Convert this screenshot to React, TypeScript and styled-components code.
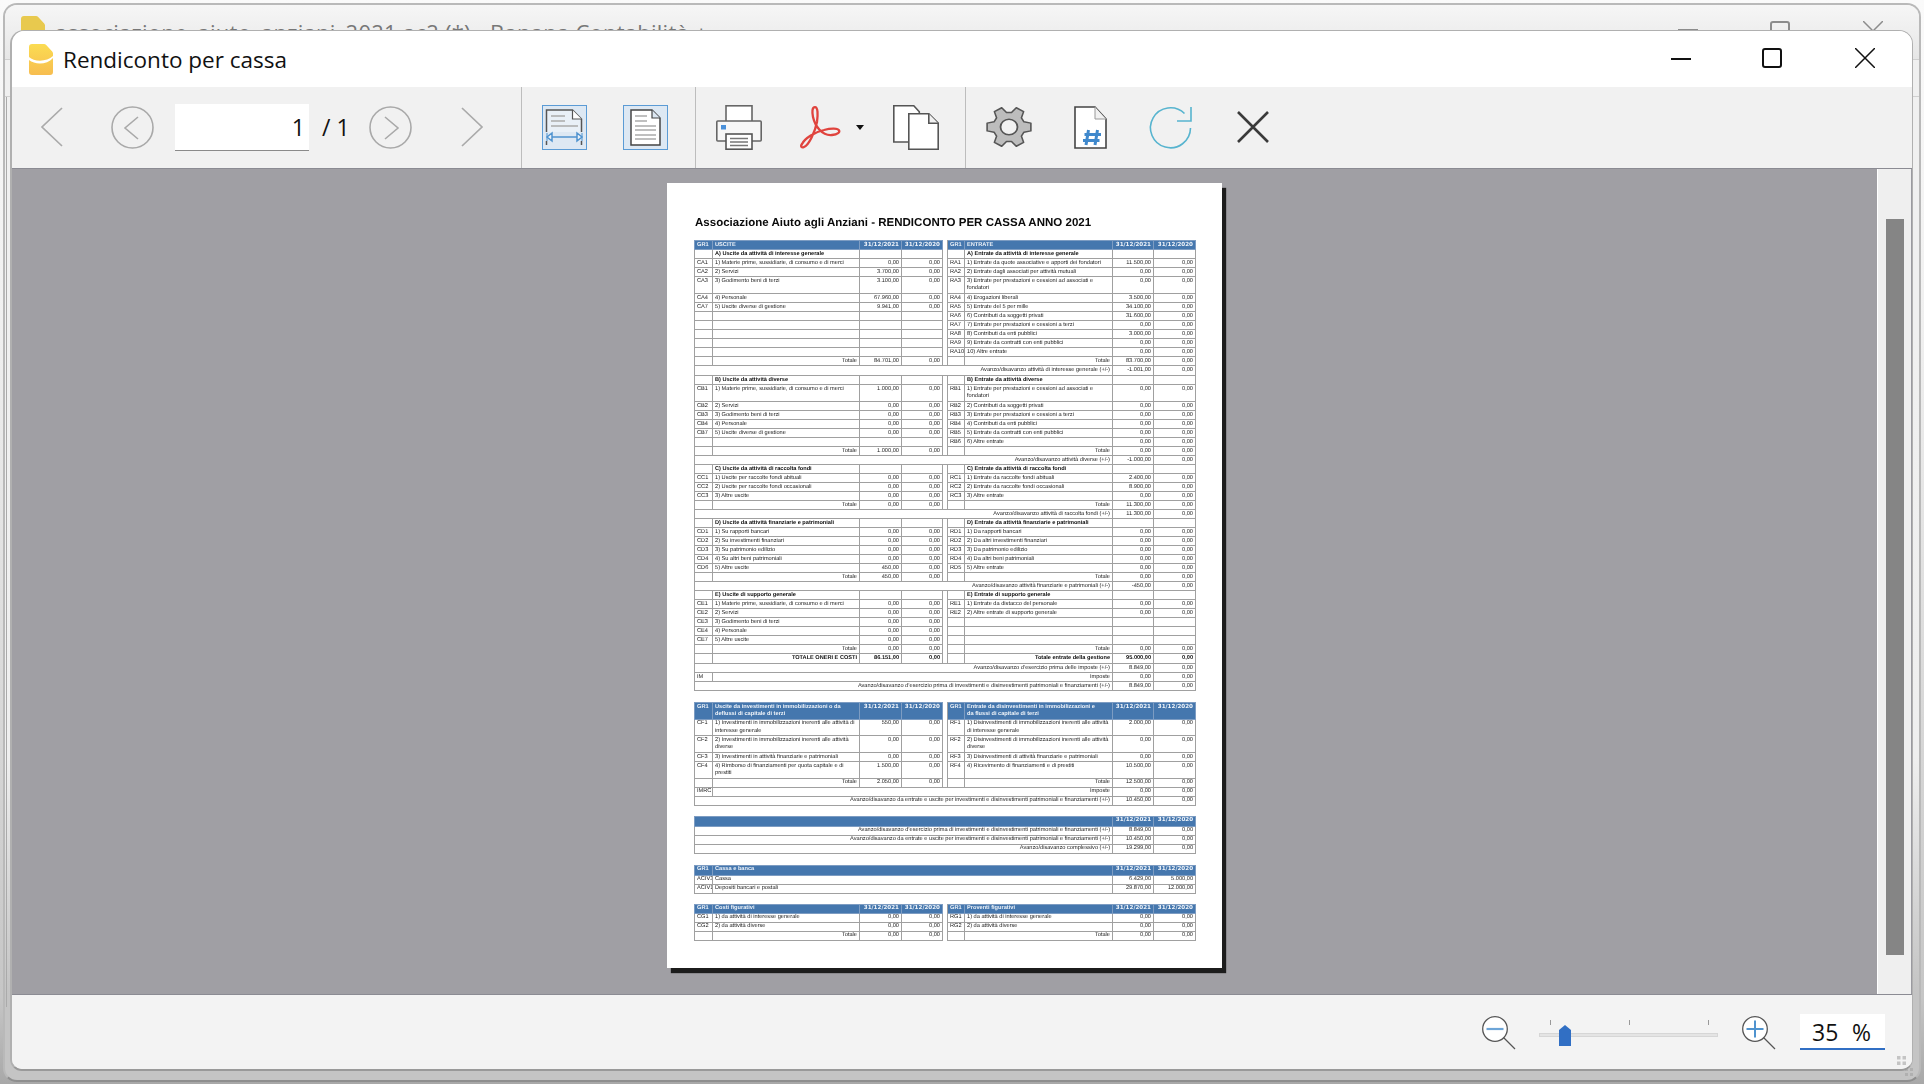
import React from 'react';
import styled, { createGlobalStyle } from 'styled-components';

const GlobalStyle = createGlobalStyle`
  html, body { margin: 0; padding: 0; width: 1924px; height: 1084px; overflow: hidden; }
  * { box-sizing: border-box; }
  body { font-family: "Open Sans", "Liberation Sans", sans-serif; }
`;

const Desktop = styled.div`
  position: relative;
  width: 1924px;
  height: 1084px;
  overflow: hidden;
  background: linear-gradient(#fafafa, #f0f0f0 30%, #c6c6c6 92%, #a8a8a8);
`;

const BackWindow = styled.div`
  position: absolute;
  left: 3px;
  top: 3px;
  width: 1918px;
  height: 1079px;
  border: 2px solid #b9b9b9;
  border-bottom-color: #8e8e8e;
  border-radius: 14px;
  background: linear-gradient(#f0f0f0 30%, #efefef 70%, #c4c4c4 92%);
  overflow: hidden;
`;

const BackTitleBar = styled.div`
  display: flex;
  align-items: flex-start;
  height: 55px;
  padding: 11px 36px 0 16px;
  background: linear-gradient(#f6f6f6, #e6e6e6);
  border-bottom: 1px solid #cfcfcf;
  color: #777;
  font-size: 22px;
  white-space: nowrap;
`;

const BackLogo = styled.svg`
  flex: none;
  width: 24px;
  height: 31px;
  margin-right: 10px;
`;

const BackCaption = styled.span`
  flex: 1;
  margin-top: 1px;
  letter-spacing: 0.25px;
`;

const BackControl = styled.svg<{ $left: number; $top: number }>`
  flex: none;
  width: 20px;
  height: 20px;
  margin-left: ${p => p.$left}px;
  margin-top: ${p => p.$top}px;
`;

const BackToolbar = styled.div`
  height: 37px;
  border-bottom: 1px solid #d0d0d0;
`;

const BackBody = styled.div`
  height: 910px;
  margin-left: 1px;
  border-left: 1px solid #aaa;
`;

const BackGrip = styled.svg`
  position: absolute;
  right: 6px;
  bottom: 3px;
  width: 8px;
  height: 9px;
`;

const Dialog = styled.div`
  position: absolute;
  left: 10px;
  top: 30px;
  width: 1903px;
  height: 1041px;
  display: flex;
  flex-direction: column;
  border: solid #b0b0b0;
  border-width: 1px 1px 2px 2px;
  border-bottom-color: #999;
  border-radius: 14px 14px 12px 12px;
  background: #f1f1f1;
  overflow: hidden;
`;

const TitleBar = styled.header`
  flex: none;
  display: flex;
  align-items: center;
  height: 56px;
  padding: 0 37px 0 17px;
  background: #fff;
`;

const AppLogo = styled.svg`
  flex: none;
  width: 24px;
  height: 31px;
  margin-right: 10px;
`;

const TitleText = styled.h1`
  flex: 1;
  margin: 0;
  font-size: 22.5px;
  font-weight: 400;
  color: #111;
`;

const WindowIcon = styled.svg<{ $left: number }>`
  flex: none;
  width: 20px;
  height: 20px;
  margin-left: ${p => p.$left}px;
  margin-top: -2px;
  fill: none;
  stroke: #111;
`;

const Toolbar = styled.nav`
  flex: none;
  display: flex;
  height: 81px;
  background: #f1f1f1;
`;

const ToolGroup = styled.div<{ $width?: number }>`
  display: flex;
  align-items: center;
  padding-bottom: 1px;
  ${p => (p.$width ? `flex: none; width: ${p.$width}px; border-right: 1px solid #bdbdbd;` : 'flex: 1;')}
`;

const ToolIcon = styled.svg<{ $left: number; $w: number; $h: number }>`
  flex: none;
  width: ${p => p.$w}px;
  height: ${p => p.$h}px;
  margin-left: ${p => p.$left}px;
  overflow: visible;
`;

const PageInput = styled.div`
  flex: none;
  width: 134px;
  height: 47px;
  margin-left: 21px;
  padding-right: 4px;
  background: #fff;
  border-bottom: 1px solid #8a8a8a;
  font-size: 23px;
  line-height: 47px;
  text-align: right;
  color: #111;
`;

const PageCount = styled.span`
  flex: none;
  width: 47px;
  margin-left: 13px;
  font-size: 23px;
  color: #111;
  white-space: pre;
`;

const Workspace = styled.main`
  flex: 1;
  min-height: 0;
  display: flex;
  background: #a09fa4;
  border-top: 1px solid #8b8b93;
  border-bottom: 1px solid #8b8b93;
`;

const Viewport = styled.div`
  flex: 1;
  min-width: 0;
  padding: 14px 0 0 655px;
`;

const Scrollbar = styled.div`
  flex: none;
  width: 35px;
  padding: 50px 7px 0 8px;
  background: #efefef;
  border-left: 1px solid #fff;
  border-right: 1px solid #9a9aa0;
`;

const ScrollThumb = styled.div`
  height: 736px;
  background: #858585;
`;

const Sheet = styled.article`
  width: 555px;
  height: 785px;
  padding: 34px 0 0 27px;
  background: #fff;
  box-shadow: 4px 5px 1px #1c1c1c;
  filter: blur(0.25px);
  text-rendering: geometricPrecision;
`;

const SheetTitle = styled.h2`
  margin: 0 0 11px 1px;
  height: 12px;
  font: 700 11.5px/12px "Liberation Sans", sans-serif;
  letter-spacing: 0.02px;
  color: #0a0a0a;
  white-space: nowrap;
`;

const Report = styled.table<{ $gap?: number }>`
  width: 501px;
  margin-bottom: ${p => p.$gap ?? 0}px;
  border-collapse: collapse;
  table-layout: fixed;
  font: 400 5.65px/7.5px "Liberation Sans", sans-serif;
  color: #1c1c1c;
`;

const Cell = styled.td<{ $head?: boolean; $bold?: boolean; $right?: boolean }>`
  padding: 0.5px 2px 0;
  vertical-align: top;
  overflow: hidden;
  white-space: pre;
  border: 1px solid ${p => (p.$head ? '#7d9cc2' : '#a0a0a0')};
  text-align: ${p => (p.$right ? 'right' : 'left')};
  ${p => p.$bold && 'font: 700 5.6px/7.5px "Liberation Sans", sans-serif; color: #0c0c0c;'}
  ${p => p.$head && 'font-weight: 700; color: #eef3f9; background: #4577ae;'}
`;

const DateCell = styled(Cell)`
  font: 700 5.6px/7.5px "DejaVu Sans", sans-serif;
`;

const Gap = styled.td`
  padding: 0;
  border: 1px solid #a0a0a0;
  border-width: 0 1px;
  background: #fff;
`;

const WideLabel = styled.div<{ $right?: boolean }>`
  text-align: ${p => (p.$right ? 'right' : 'left')};
`;

const StatusBar = styled.footer`
  position: relative;
  flex: none;
  height: 74px;
  display: flex;
  align-items: center;
  justify-content: flex-end;
  padding-right: 27px;
  background: #f3f3f3;
`;

const ZoomTrack = styled.div`
  position: relative;
  flex: none;
  width: 179px;
  height: 24px;
  margin: 0 24px 0 24px;
`;

const TrackBar = styled.div`
  position: absolute;
  left: 0;
  right: 0;
  top: 13px;
  height: 4px;
  background: #e4e4e4;
  border: 1px solid #d6d6d6;
`;

const Tick = styled.i<{ $at: number }>`
  position: absolute;
  left: ${p => p.$at}px;
  top: 0;
  width: 1px;
  height: 5px;
  background: #999;
`;

const Thumb = styled.svg`
  position: absolute;
  left: 20px;
  top: 5px;
  width: 12px;
  height: 21px;
`;

const ZoomValue = styled.div`
  flex: none;
  display: flex;
  justify-content: space-between;
  width: 85px;
  height: 36px;
  margin-left: 25px;
  padding: 0 14px 0 12px;
  background: #fff;
  border-bottom: 2px solid #316fc4;
  font-size: 23px;
  line-height: 36px;
  color: #111;
`;

const Grip = styled.svg`
  position: absolute;
  right: 6px;
  bottom: 4px;
  width: 9px;
  height: 9px;
`;

type Row = { h: number; l?: string[]; r?: string[]; wide?: string; wideL?: string; kind?: 'head' | 'sec' | 'total' };

const z = '0,00';
const blank = ['', '', '', ''];

const main: Row[] = [
  { h: 9, kind: 'head', l: ['GR1', 'USCITE', '31/12/2021', '31/12/2020'], r: ['GR1', 'ENTRATE', '31/12/2021', '31/12/2020'] },
  { h: 9, kind: 'sec', l: ['', 'A) Uscite da attività di interesse generale', '', ''], r: ['', 'A) Entrate da attività di interesse generale', '', ''] },
  { h: 9, l: ['CA1', '1) Materie prime, sussidiarie, di consumo e di merci', z, z], r: ['RA1', '1) Entrate da quote associative e apporti dei fondatori', '11.500,00', z] },
  { h: 9, l: ['CA2', '2) Servizi', '3.700,00', z], r: ['RA2', '2) Entrate dagli associati per attività mutuali', z, z] },
  { h: 17, l: ['CA3', '3) Godimento beni di terzi', '3.100,00', z], r: ['RA3', '3) Entrate per prestazioni e cessioni ad associati e\nfondatori', z, z] },
  { h: 9, l: ['CA4', '4) Personale', '67.960,00', z], r: ['RA4', '4) Erogazioni liberali', '3.500,00', z] },
  { h: 9, l: ['CA7', '5) Uscite diverse di gestione', '9.941,00', z], r: ['RA5', '5) Entrate del 5 per mille', '34.100,00', z] },
  { h: 9, l: blank, r: ['RA6', '6) Contributi da soggetti privati', '31.600,00', z] },
  { h: 9, l: blank, r: ['RA7', '7) Entrate per prestazioni e cessioni a terzi', z, z] },
  { h: 9, l: blank, r: ['RA8', '8) Contributi da enti pubblici', '3.000,00', z] },
  { h: 9, l: blank, r: ['RA9', '9) Entrate da contratti con enti pubblici', z, z] },
  { h: 9, l: blank, r: ['RA10', '10) Altre entrate', z, z] },
  { h: 9, kind: 'total', l: ['', 'Totale', '84.701,00', z], r: ['', 'Totale', '83.700,00', z] },
  { h: 10, wide: 'Avanzo/disavanzo attività di interesse generale (+/-)', r: ['-1.001,00', z] },

  { h: 9, kind: 'sec', l: ['', 'B) Uscite da attività diverse', '', ''], r: ['', 'B) Entrate da attività diverse', '', ''] },
  { h: 17, l: ['CB1', '1) Materie prime, sussidiarie, di consumo e di merci', '1.000,00', z], r: ['RB1', '1) Entrate per prestazioni e cessioni ad associati e\nfondatori', z, z] },
  { h: 9, l: ['CB2', '2) Servizi', z, z], r: ['RB2', '2) Contributi da soggetti privati', z, z] },
  { h: 9, l: ['CB3', '3) Godimento beni di terzi', z, z], r: ['RB3', '3) Entrate per prestazioni e cessioni a terzi', z, z] },
  { h: 9, l: ['CB4', '4) Personale', z, z], r: ['RB4', '4) Contributi da enti pubblici', z, z] },
  { h: 9, l: ['CB7', '5) Uscite diverse di gestione', z, z], r: ['RB5', '5) Entrate da contratti con enti pubblici', z, z] },
  { h: 9, l: blank, r: ['RB6', '6) Altre entrate', z, z] },
  { h: 9, kind: 'total', l: ['', 'Totale', '1.000,00', z], r: ['', 'Totale', z, z] },
  { h: 9, wide: 'Avanzo/disavanzo attività diverse (+/-)', r: ['-1.000,00', z] },

  { h: 9, kind: 'sec', l: ['', 'C) Uscite da attività di raccolta fondi', '', ''], r: ['', 'C) Entrate da attività di raccolta fondi', '', ''] },
  { h: 9, l: ['CC1', '1) Uscite per raccolte fondi abituali', z, z], r: ['RC1', '1) Entrate da raccolte fondi abituali', '2.400,00', z] },
  { h: 9, l: ['CC2', '2) Uscite per raccolte fondi occasionali', z, z], r: ['RC2', '2) Entrate da raccolte fondi occasionali', '8.900,00', z] },
  { h: 9, l: ['CC3', '3) Altre uscite', z, z], r: ['RC3', '3) Altre entrate', z, z] },
  { h: 9, kind: 'total', l: ['', 'Totale', z, z], r: ['', 'Totale', '11.300,00', z] },
  { h: 9, wide: 'Avanzo/disavanzo attività di raccolta fondi (+/-)', r: ['11.300,00', z] },

  { h: 9, kind: 'sec', l: ['', 'D) Uscite da attività finanziarie e patrimoniali', '', ''], r: ['', 'D) Entrate da attività finanziarie e patrimoniali', '', ''] },
  { h: 9, l: ['CD1', '1) Su rapporti bancari', z, z], r: ['RD1', '1) Da rapporti bancari', z, z] },
  { h: 9, l: ['CD2', '2) Su investimenti finanziari', z, z], r: ['RD2', '2) Da altri investimenti finanziari', z, z] },
  { h: 9, l: ['CD3', '3) Su patrimonio edilizio', z, z], r: ['RD3', '3) Da patrimonio edilizio', z, z] },
  { h: 9, l: ['CD4', '4) Su altri beni patrimoniali', z, z], r: ['RD4', '4) Da altri beni patrimoniali', z, z] },
  { h: 9, l: ['CD6', '5) Altre uscite', '450,00', z], r: ['RD5', '5) Altre entrate', z, z] },
  { h: 9, kind: 'total', l: ['', 'Totale', '450,00', z], r: ['', 'Totale', z, z] },
  { h: 9, wide: 'Avanzo/disavanzo attività finanziarie e patrimoniali (+/-)', r: ['-450,00', z] },

  { h: 9, kind: 'sec', l: ['', 'E) Uscite di supporto generale', '', ''], r: ['', 'E) Entrate di supporto generale', '', ''] },
  { h: 9, l: ['CE1', '1) Materie prime, sussidiarie, di consumo e di merci', z, z], r: ['RE1', '1) Entrate da distacco del personale', z, z] },
  { h: 9, l: ['CE2', '2) Servizi', z, z], r: ['RE2', '2) Altre entrate di supporto generale', z, z] },
  { h: 9, l: ['CE3', '3) Godimento beni di terzi', z, z], r: blank },
  { h: 9, l: ['CE4', '4) Personale', z, z], r: blank },
  { h: 9, l: ['CE7', '5) Altre uscite', z, z], r: blank },
  { h: 9, kind: 'total', l: ['', 'Totale', z, z], r: ['', 'Totale', z, z] },
  { h: 10, kind: 'total', l: ['', 'TOTALE ONERI E COSTI', '86.151,00', '0,00'], r: ['', 'Totale entrate della gestione', '95.000,00', '0,00'] },
  { h: 9, wide: 'Avanzo/disavanzo d’esercizio prima delle imposte (+/-)', r: ['8.849,00', z] },
  { h: 9, wideL: 'IM', wide: 'Imposte', r: [z, z] },
  { h: 9, wide: 'Avanzo/disavanzo d’esercizio prima di investimenti e disinvestimenti patrimoniali e finanziamenti (+/-)', r: ['8.849,00', z] },
];

const invest: Row[] = [
  { h: 16, kind: 'head', l: ['GR1', 'Uscite da investimenti in immobilizzazioni o da\ndeflussi di capitale di terzi', '31/12/2021', '31/12/2020'], r: ['GR1', 'Entrate da disinvestimenti in immobilizzazioni e\nda flussi di capitale di terzi', '31/12/2021', '31/12/2020'] },
  { h: 16, l: ['CF1', '1) Investimenti in immobilizzazioni inerenti alle attività di\ninteresse generale', '550,00', z], r: ['RF1', '1) Disinvestimenti di immobilizzazioni inerenti alle attività\ndi interesse generale', '2.000,00', z] },
  { h: 17, l: ['CF2', '2) Investimenti in immobilizzazioni inerenti alle attività\ndiverse', z, z], r: ['RF2', '2) Disinvestimenti di immobilizzazioni inerenti alle attività\ndiverse', z, z] },
  { h: 9, l: ['CF3', '3) Investimenti in attività finanziarie e patrimoniali', z, z], r: ['RF3', '3) Disinvestimenti di attività finanziarie e patrimoniali', z, z] },
  { h: 16, l: ['CF4', '4) Rimborso di finanziamenti per quota capitale e di\nprestiti', '1.500,00', z], r: ['RF4', '4) Ricevimento di finanziamenti e di prestiti', '10.500,00', z] },
  { h: 9, kind: 'total', l: ['', 'Totale', '2.050,00', z], r: ['', 'Totale', '12.500,00', z] },
  { h: 9, wideL: 'IMRC', wide: 'Imposte', r: [z, z] },
  { h: 9, wide: 'Avanzo/disavanzo da entrate e uscite per investimenti e disinvestimenti patrimoniali e finanziamenti (+/-)', r: ['10.450,00', z] },
];

const summary: Row[] = [
  { h: 10, kind: 'head', wide: '', r: ['31/12/2021', '31/12/2020'] },
  { h: 9, wide: 'Avanzo/disavanzo d’esercizio prima di investimenti e disinvestimenti patrimoniali e finanziamenti (+/-)', r: ['8.849,00', z] },
  { h: 9, wide: 'Avanzo/disavanzo da entrate e uscite per investimenti e disinvestimenti patrimoniali e finanziamenti (+/-)', r: ['10.450,00', z] },
  { h: 9, wide: 'Avanzo/disavanzo complessivo (+/-)', r: ['19.299,00', z] },
];

const cash: Row[] = [
  { h: 10, kind: 'head', wideL: 'GR1', wide: 'Cassa e banca', r: ['31/12/2021', '31/12/2020'] },
  { h: 9, wideL: 'ACIV3', wide: 'Cassa', r: ['6.429,00', '5.000,00'] },
  { h: 9, wideL: 'ACIV1', wide: 'Depositi bancari e postali', r: ['29.870,00', '12.000,00'] },
];

const figurative: Row[] = [
  { h: 9, kind: 'head', l: ['GR1', 'Costi figurativi', '31/12/2021', '31/12/2020'], r: ['GR1', 'Proventi figurativi', '31/12/2021', '31/12/2020'] },
  { h: 9, l: ['CG1', '1) da attività di interesse generale', z, z], r: ['RG1', '1) da attività di interesse generale', z, z] },
  { h: 9, l: ['CG2', '2) da attività diverse', z, z], r: ['RG2', '2) da attività diverse', z, z] },
  { h: 9, kind: 'total', l: ['', 'Totale', z, z], r: ['', 'Totale', z, z] },
];

const isGrandTotal = (label: string) => label.startsWith('TOTALE') || label.startsWith('Totale entrate');

// one amount cell: the year headings use the wider face of the printed report
const Amount = ({ value, head, bold }: { value: string; head: boolean; bold?: boolean }) =>
  head ? <DateCell $head $right>{value}</DateCell> : <Cell $right $bold={bold}>{value}</Cell>;

const Side = ({ cells, kind }: { cells: string[]; kind?: Row['kind'] }) => {
  const head = kind === 'head';
  const grand = isGrandTotal(cells[1]);
  return (
    <>
      <Cell $head={head}>{cells[0]}</Cell>
      <Cell $head={head} $bold={kind === 'sec' || grand} $right={kind === 'total'}>{cells[1]}</Cell>
      <Amount value={cells[2]} head={head} bold={grand} />
      <Amount value={cells[3]} head={head} bold={grand} />
    </>
  );
};

const ReportTable = ({ rows, gap }: { rows: Row[]; gap?: number }) => (
  <Report $gap={gap}>
    <colgroup>
      {[18, 147, 42, 41, 5, 17, 148, 41, 42].map((w, i) => (
        <col key={i} style={{ width: w }} />
      ))}
    </colgroup>
    <tbody>
      {rows.map((row, i) => {
        const head = row.kind === 'head';
        return (
          <tr key={i} style={{ height: row.h }}>
            {row.l ? (
              <>
                <Side cells={row.l} kind={row.kind} />
                <Gap />
                <Side cells={row.r!} kind={row.kind} />
              </>
            ) : (
              <>
                {row.wideL !== undefined && <Cell $head={head}>{row.wideL}</Cell>}
                <Cell $head={head} colSpan={row.wideL !== undefined ? 6 : 7}>
                  <WideLabel $right={row.wideL === undefined || row.wide === 'Imposte'}>{row.wide}</WideLabel>
                </Cell>
                <Amount value={row.r![0]} head={head} />
                <Amount value={row.r![1]} head={head} />
              </>
            )}
          </tr>
        );
      })}
    </tbody>
  </Report>
);

const LOGO_PATH = 'M3 0h12a3 3 0 0 1 2.2 1l6 6.5a3 3 0 0 1 .8 2V28a3 3 0 0 1-3 3H3a3 3 0 0 1-3-3V3a3 3 0 0 1 3-3z';

const BananaFront = ({ className }: { className?: string }) => (
  <svg className={className} viewBox="0 0 24 31">
    <defs>
      <linearGradient id="banana-front" x1="0" y1="0" x2="0" y2="1">
        <stop offset="0" stopColor="#fbdc52" />
        <stop offset="1" stopColor="#f7bd50" />
      </linearGradient>
    </defs>
    <path d={LOGO_PATH} fill="url(#banana-front)" />
    <path d="M0 13c5 5 18 5 24-1v2c-6 7-18 7-24 2z" fill="#fff" />
  </svg>
);

const BananaBack = ({ className }: { className?: string }) => (
  <svg className={className} viewBox="0 0 24 31">
    <path d={LOGO_PATH} fill="#e8c94e" />
  </svg>
);

// six-toothed wheel for the settings button
const gearPath = (() => {
  const pts: string[] = [];
  const at = (r: number, deg: number) => {
    const a = (deg * Math.PI) / 180;
    return `${(r * Math.cos(a)).toFixed(2)} ${(r * Math.sin(a)).toFixed(2)}`;
  };
  for (let t = 0; t < 6; t++) {
    const c = t * 60;
    pts.push(at(16, c - 21), at(22.3, c - 11), at(22.3, c + 11), at(16, c + 21));
  }
  return `M${pts.join('L')}Z`;
})();

const App = () => (
  <Desktop>
    <GlobalStyle />
    <BackWindow>
      <BackTitleBar>
        <BackLogo as={BananaBack} />
        <BackCaption>associazione_aiuto_anziani_2021.ac2 (*) - Banana Contabilità +</BackCaption>
        <BackControl $left={0} $top={13} viewBox="0 0 20 20"><path d="M0 1h20" stroke="#8c8c8c" strokeWidth="2" /></BackControl>
        <BackControl $left={72} $top={5} viewBox="0 0 20 20"><rect x="1" y="1" width="18" height="18" rx="2" fill="none" stroke="#8c8c8c" strokeWidth="2" /></BackControl>
        <BackControl $left={73} $top={5} viewBox="0 0 20 20"><path d="M0 0l20 20M20 0 0 20" stroke="#8c8c8c" strokeWidth="1.5" /></BackControl>
      </BackTitleBar>
      <BackToolbar />
      <BackBody />
      <BackGrip viewBox="0 0 8 9" fill="#b0b0b0"><path d="M0 0h3v3H0zM5 0h3v3H5zM0 5h3v3H0zM5 5h3v3H5z" /></BackGrip>
    </BackWindow>
    <Dialog>
      <TitleBar>
        <AppLogo as={BananaFront} />
        <TitleText>Rendiconto per cassa</TitleText>
        <WindowIcon $left={0} viewBox="0 0 20 20" strokeWidth="2"><path d="M0 11h20" /></WindowIcon>
        <WindowIcon $left={71} viewBox="0 0 20 20" strokeWidth="2"><rect x="1" y="1" width="18" height="18" rx="2" /></WindowIcon>
        <WindowIcon $left={73} viewBox="0 0 20 20" strokeWidth="1.5"><path d="M0 0l20 20M20 0 0 20" /></WindowIcon>
      </TitleBar>
      <Toolbar>
        <ToolGroup $width={510}>
          <ToolIcon $left={29} $w={22} $h={40} viewBox="0 0 22 40" fill="none" stroke="#aaa" strokeWidth="1.7">
            <path d="M21 1 1 20l20 19" />
          </ToolIcon>
          <ToolIcon $left={48} $w={43} $h={43} viewBox="0 0 43 43" fill="none" stroke="#a9a9a9" strokeWidth="1.6">
            <circle cx="21.5" cy="21.5" r="20.5" />
            <path d="M27 11 14 22l13 11" />
          </ToolIcon>
          <PageInput>1</PageInput>
          <PageCount>/ 1</PageCount>
          <ToolIcon $left={0} $w={43} $h={43} viewBox="0 0 43 43" fill="none" stroke="#a9a9a9" strokeWidth="1.6">
            <circle cx="21.5" cy="21.5" r="20.5" />
            <path d="M16 11l13 11-13 11" />
          </ToolIcon>
          <ToolIcon $left={49} $w={22} $h={40} viewBox="0 0 22 40" fill="none" stroke="#aaa" strokeWidth="1.7">
            <path d="M1 1l20 19L1 39" />
          </ToolIcon>
        </ToolGroup>
        <ToolGroup $width={174}>
          <ToolIcon $left={20} $w={45} $h={45} viewBox="0 0 45 45">
            <rect x="0.5" y="0.5" width="44" height="44" fill="#dde8f3" stroke="#5b9bd5" />
            <path d="M4.5 27V5h26l9 9v13M4.5 36v4M39.5 36v4" fill="#e9f0f7" stroke="#555" strokeWidth="1.5" />
            <path d="M30.5 5v9h9" fill="#fff" stroke="#555" strokeWidth="1.2" />
            <path d="M9 11h14M9 16h14M9 21h27" stroke="#aaa" strokeWidth="1.5" />
            <path d="M10 32h25" stroke="#4f93cf" strokeWidth="1.5" />
            <path d="M10 28l-5 4 5 4zM35 28l5 4-5 4z" fill="#e9f0f7" stroke="#4f93cf" strokeWidth="1.5" />
            <path d="M5 28v8M40 28v8" stroke="#4f93cf" strokeWidth="1" />
          </ToolIcon>
          <ToolIcon $left={36} $w={45} $h={45} viewBox="0 0 45 45">
            <rect x="0.5" y="0.5" width="44" height="44" fill="#dde8f3" stroke="#5b9bd5" />
            <path d="M8 5h21l8 8v27H8z" fill="#fff" stroke="#444" strokeWidth="1.5" />
            <path d="M29 5v8h8" fill="#dde8f3" stroke="#444" strokeWidth="1.2" />
            <path d="M12 11h12M12 16h12M12 21h21M12 25h21M12 30h21M12 34h21" stroke="#aaa" strokeWidth="1.6" />
          </ToolIcon>
        </ToolGroup>
        <ToolGroup $width={270}>
          <ToolIcon $left={20} $w={46} $h={45} viewBox="0 0 46 45" strokeWidth="1.6">
            <rect x="10" y="0.8" width="26" height="18" fill="#fff" stroke="#666" />
            <rect x="0.8" y="16" width="44.4" height="20" rx="1" fill="#f7f7f7" stroke="#666" />
            <rect x="5" y="20" width="5" height="4.5" fill="#4a90d9" />
            <rect x="10" y="29" width="26" height="15.2" fill="#fff" stroke="#555" />
            <path d="M14 33.5h18M14 37h18M14 40.5h18" stroke="#777" />
          </ToolIcon>
          <ToolIcon $left={38} $w={40} $h={42} viewBox="0 0 40 42" fill="none" stroke="#e0443e" strokeWidth="2.3">
            <path d="M15 1.2C12 1.2 12 6 13 11c2 9 9 19 19 18 6-.5 8-3 7-4.500-1-2.500-8-2.500-15-.5C15 26 5 32 2 38c-2 3 0 4 2 3 5-2 11-15 13-25 1-7 1-14.800-2-14.800z" />
          </ToolIcon>
          <ToolIcon $left={16} $w={8} $h={5} viewBox="0 0 8 5">
            <path d="M0 0h8L4 5z" fill="#111" />
          </ToolIcon>
          <ToolIcon $left={29} $w={46} $h={45} viewBox="0 0 46 45" strokeWidth="1.6">
            <path d="M.8.8h20l5.500 6V37H.8z" fill="#fff" stroke="#555" />
            <path d="M15.800 8.800h20l9.400 9.400v26H15.800z" fill="#fff" stroke="#555" />
            <path d="M35.800 8.800v9.400h9.400" fill="#f1f1f1" stroke="#555" />
          </ToolIcon>
        </ToolGroup>
        <ToolGroup>
          <ToolIcon $left={20} $w={46} $h={42} viewBox="-23 -23 46 46" preserveAspectRatio="none">
            <path d={gearPath} fill="#bdbdbd" stroke="#555" strokeWidth="1.6" strokeLinejoin="round" />
            <circle cx="0" cy="0" r="8.500" fill="#f1f1f1" stroke="#555" strokeWidth="1.8" />
          </ToolIcon>
          <ToolIcon $left={42} $w={33} $h={43} viewBox="0 0 33 43">
            <path d="M1 1h20l11 12v29H1z" fill="#fff" stroke="#444" strokeWidth="1.6" />
            <path d="M21 1v12h11" fill="#f1f1f1" stroke="#999" />
            <path d="M14.500 24 12 39M23.500 24 21 39M10.500 28.500H27M9 34.500h16.500" fill="none" stroke="#3f88cc" strokeWidth="3" />
          </ToolIcon>
          <ToolIcon $left={43} $w={42} $h={41} viewBox="0 0 42 41" fill="none" stroke="#57b4cf" strokeWidth="1.6">
            <path d="M34.500 6.500A20 20 0 1 0 40.500 21" />
            <path d="M41 0v14H27" />
          </ToolIcon>
          <ToolIcon $left={45} $w={32} $h={32} viewBox="0 0 32 32" fill="none" stroke="#3a3a3a" strokeWidth="2.600">
            <path d="M1 1l30 30M31 1 1 31" />
          </ToolIcon>
        </ToolGroup>
      </Toolbar>
      <Workspace>
        <Viewport>
          <Sheet>
            <SheetTitle>Associazione Aiuto agli Anziani - RENDICONTO PER CASSA ANNO 2021</SheetTitle>
            <ReportTable rows={main} gap={11} />
            <ReportTable rows={invest} gap={10} />
            <ReportTable rows={summary} gap={11} />
            <ReportTable rows={cash} gap={10} />
            <ReportTable rows={figurative} />
          </Sheet>
        </Viewport>
        <Scrollbar><ScrollThumb /></Scrollbar>
      </Workspace>
      <StatusBar>
        <ToolIcon $left={0} $w={33} $h={33} viewBox="0 0 33 33" fill="none" stroke="#555" strokeWidth="1.3">
          <circle cx="13" cy="13" r="12.300" fill="#fff" />
          <path d="M21.500 21.500 33 33" />
          <path d="M4.500 13h17" stroke="#6da5d8" strokeWidth="2.200" />
        </ToolIcon>
        <ZoomTrack>
          <Tick $at={11} /><Tick $at={90} /><Tick $at={169} />
          <TrackBar />
          <Thumb viewBox="0 0 12 21"><path d="M6 0l6 5v16H0V5z" fill="#316fc4" /></Thumb>
        </ZoomTrack>
        <ToolIcon $left={0} $w={33} $h={33} viewBox="0 0 33 33" fill="none" stroke="#555" strokeWidth="1.3">
          <circle cx="13" cy="13" r="12.300" fill="#fff" />
          <path d="M21.500 21.500 33 33" />
          <path d="M4.500 13h17M13 4.500v17" stroke="#4f93cf" strokeWidth="2" />
        </ToolIcon>
        <ZoomValue><span>35</span><span>%</span></ZoomValue>
        <Grip viewBox="0 0 9 9" fill="#c4c4c4">
          <path d="M0 0h3.500v3.500H0zM5.500 0H9v3.500H5.500zM0 5.500h3.500V9H0zM5.500 5.500H9V9H5.500z" />
        </Grip>
      </StatusBar>
    </Dialog>
  </Desktop>
);

export default App;
